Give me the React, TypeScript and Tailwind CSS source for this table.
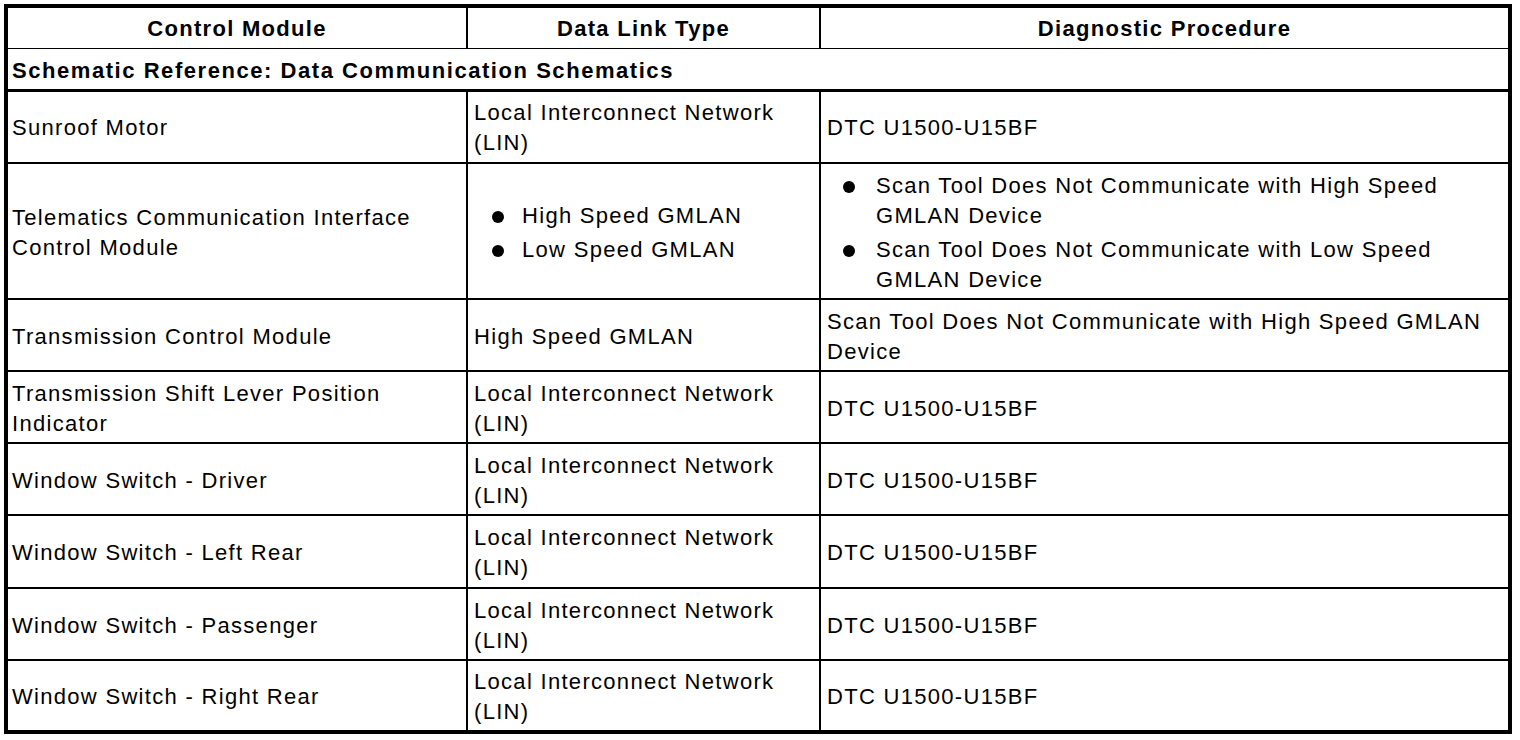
import React from "react";

type Row = { module: React.ReactNode; link: React.ReactNode; proc: React.ReactNode; h: number };

const LIN = (
  <>
    Local Interconnect Network
    <br />
    (LIN)
  </>
);
const DTC = "DTC U1500-U15BF";

function Bullets({ items, bulletW }: { items: React.ReactNode[]; bulletW: string }) {
  return (
    <ul className="flex flex-col gap-[4px]">
      {items.map((it, i) => (
        <li key={i} className="flex">
          <span className={`${bulletW} shrink-0 flex items-start`}>
            <span className="mt-[10px] block h-[12px] w-[12px] rounded-full bg-black" />
          </span>
          <span>{it}</span>
        </li>
      ))}
    </ul>
  );
}

const rows: Row[] = [
  { module: "Sunroof Motor", link: LIN, proc: DTC, h: 73 },
  {
    module: (
      <>
        Telematics Communication Interface
        <br />
        Control Module
      </>
    ),
    link: (
      <div className="pl-[18px]">
        <Bullets bulletW="w-[30px]" items={["High Speed GMLAN", "Low Speed GMLAN"]} />
      </div>
    ),
    proc: (
      <div className="pl-[16px]">
        <Bullets
          bulletW="w-[33px]"
          items={[
            <>
              Scan Tool Does Not Communicate with High Speed
              <br />
              GMLAN Device
            </>,
            <>
              Scan Tool Does Not Communicate with Low Speed
              <br />
              GMLAN Device
            </>,
          ]}
        />
      </div>
    ),
    h: 136,
  },
  {
    module: "Transmission Control Module",
    link: "High Speed GMLAN",
    proc: (
      <>
        Scan Tool Does Not Communicate with High Speed GMLAN
        <br />
        Device
      </>
    ),
    h: 72,
  },
  {
    module: (
      <>
        Transmission Shift Lever Position
        <br />
        Indicator
      </>
    ),
    link: LIN,
    proc: DTC,
    h: 72,
  },
  { module: "Window Switch - Driver", link: LIN, proc: DTC, h: 72 },
  { module: "Window Switch - Left Rear", link: LIN, proc: DTC, h: 73 },
  { module: "Window Switch - Passenger", link: LIN, proc: DTC, h: 72 },
  { module: "Window Switch - Right Rear", link: LIN, proc: DTC, h: 72 },
];

export default function App() {
  return (
    <div
      className="w-[1520px] h-[740px] bg-white pl-[4px] pt-[4px] text-black"
      style={{ fontFamily: '"Liberation Sans", Arial, sans-serif' }}
    >
      <table className="w-[1504px] border-collapse border-[4px] border-black table-fixed text-[22px] leading-[30px] tracking-[1.3px]">
        <colgroup>
          <col className="w-[461px]" />
          <col className="w-[353px]" />
          <col className="w-[690px]" />
        </colgroup>
        <thead>
          <tr className="h-[42px]">
            <th className="border-t-[3px] border-t-black border-b border-b-black border-r-2 border-r-black pt-[2px] font-bold text-center align-middle">
              Control Module
            </th>
            <th className="border-t-[3px] border-t-black border-b border-b-black border-r-2 border-r-black pt-[2px] font-bold text-center align-middle">
              Data Link Type
            </th>
            <th className="border-t-[3px] border-t-black border-b border-b-black pt-[2px] font-bold text-center align-middle">
              Diagnostic Procedure
            </th>
          </tr>
        </thead>
        <tbody>
          <tr className="h-[42px]">
            <td
              colSpan={3}
              className="border-b-[3px] border-b-black pl-[4px] pt-[5px] font-bold tracking-[1.55px] align-middle"
            >
              Schematic Reference: Data Communication Schematics
            </td>
          </tr>
          {rows.map((r, i) => (
            <tr key={i} style={{ height: r.h }}>
              <td className="border-b-2 border-b-black border-r-2 border-r-black pl-[4px] pt-[3px] align-middle">
                {r.module}
              </td>
              <td className="border-b-2 border-b-black border-r-2 border-r-black pl-[6px] pt-[3px] align-middle">
                {r.link}
              </td>
              <td className="border-b-2 border-b-black pl-[6px] pt-[3px] align-middle">{r.proc}</td>
            </tr>
          ))}
        </tbody>
      </table>
    </div>
  );
}
